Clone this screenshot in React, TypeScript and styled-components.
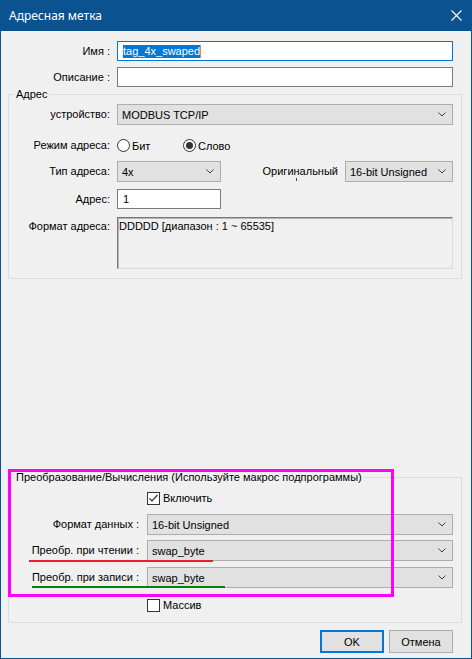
import styled, { createGlobalStyle } from "styled-components"

const GlobalStyle = createGlobalStyle`
  html, body {
    margin: 0;
    padding: 0;
    background: #f0f0f0;
  }
  body {
    font-family: "Liberation Sans", Arial, sans-serif;
    font-size: 11px;
    color: #000;
  }
  * { box-sizing: border-box; }
`

const ACCENT = "#0b5290"
const FOCUS = "#0078d7"

interface RowProps {
  $label: number
  $gap?: number
  $mt?: number
  $pr?: number
  $h?: number
  $align?: string
}

function Chevron (): JSX.Element {
  return (
    <svg width="8" height="5" viewBox="0 0 8 5">
      <polyline points="0.5,0.5 4,4 7.5,0.5" fill="none" stroke="#404040" strokeWidth="1" />
    </svg>
  )
}

function CheckMark (): JSX.Element {
  return (
    <svg width="11" height="11" viewBox="0 0 11 11">
      <polyline points="1.5,5.5 4,8 9.5,2" fill="none" stroke="#333" strokeWidth="1.2" />
    </svg>
  )
}

function Combo ({ value, width }: { value: string, width?: number }): JSX.Element {
  return (
    <Select $width={width}>
      <span>{value}</span>
      <Chevron />
    </Select>
  )
}

function App (): JSX.Element {
  return (
    <>
      <GlobalStyle />
      <Window>
        <TitleBar>
          <Title>Адресная метка</Title>
          <CloseButton>
            <svg width="11" height="11" viewBox="0 0 11 11">
              <path d="M0.5 0.5 L10.5 10.5 M10.5 0.5 L0.5 10.5" stroke="#fff" strokeWidth="1.1" />
            </svg>
          </CloseButton>
        </TitleBar>

        <Body>
          <FieldRow $label={102} $gap={7} $pr={9} $h={20}>
            <Label>Имя :</Label>
            <TextInput $focused>
              <Selected>tag_4x_swaped</Selected>
              <Caret />
            </TextInput>
          </FieldRow>
          <FieldRow $label={102} $gap={7} $pr={9} $mt={6} $h={20}>
            <Label>Описание :</Label>
            <TextInput />
          </FieldRow>

          <Group $mt={7} $pb={9}>
            <Legend>Адрес</Legend>
            <FieldRow $label={101} $gap={7} $mt={3} $h={21}>
              <Label>устройство:</Label>
              <Combo value="MODBUS TCP/IP" />
            </FieldRow>
            <FieldRow $label={101} $gap={7} $mt={10} $h={21}>
              <Label>Режим адреса:</Label>
              <Inline>
                <RadioOption $width={66}>
                  <Radio />
                  <span>Бит</span>
                </RadioOption>
                <RadioOption>
                  <Radio $checked />
                  <span>Слово</span>
                </RadioOption>
              </Inline>
            </FieldRow>
            <FieldRow $label={101} $gap={7} $mt={5} $h={21}>
              <Label>Тип адреса:</Label>
              <Inline $gap={7}>
                <Combo value="4x" width={104} />
                <SideLabel>Оригинальный</SideLabel>
                <Combo value="16-bit Unsigned" width={108} />
              </Inline>
            </FieldRow>
            <FieldRow $label={101} $gap={7} $mt={7} $h={20}>
              <Label>Адрес:</Label>
              <TextInput $width={104}>1</TextInput>
            </FieldRow>
            <FieldRow $label={101} $gap={7} $mt={8} $h={52} $align="start">
              <Label $top={3}>Формат адреса:</Label>
              <FormatBox>DDDDD [диапазон : 1 ~ 65535]</FormatBox>
            </FieldRow>
          </Group>

          <Spacer />

          <Group $pb={9}>
            <Legend>Преобразование/Вычисления (Используйте макрос подпрограммы)</Legend>
            <FieldRow $label={130} $gap={8} $mt={8} $h={14} $align="start">
              <span />
              <CheckOption>
                <CheckBox><CheckMark /></CheckBox>
                <span>Включить</span>
              </CheckOption>
            </FieldRow>
            <FieldRow $label={130} $gap={8} $mt={8} $h={21}>
              <Label>Формат данных :</Label>
              <Combo value="16-bit Unsigned" />
            </FieldRow>
            <FieldRow $label={130} $gap={8} $mt={5} $h={21}>
              <Label>Преобр. при чтении :</Label>
              <Combo value="swap_byte" />
            </FieldRow>
            <FieldRow $label={130} $gap={8} $mt={6} $h={21}>
              <Label>Преобр. при записи :</Label>
              <Combo value="swap_byte" />
            </FieldRow>
            <FieldRow $label={130} $gap={8} $mt={11} $h={14} $align="start">
              <span />
              <CheckOption>
                <CheckBox />
                <span>Массив</span>
              </CheckOption>
            </FieldRow>

            <Highlight />
            <Underline $color="#e8202a" $left={20} $top={82} $width={184} />
            <Underline $color="#0a800a" $left={23} $top={108} $width={193} />
          </Group>

          <ButtonRow>
            <Button $primary>OK</Button>
            <Button>Отмена</Button>
          </ButtonRow>
        </Body>
      </Window>
    </>
  )
}

const Window = styled.div`
  width: 472px;
  height: 659px;
  display: flex;
  flex-direction: column;
  border: 1px solid ${ACCENT};
  border-top: none;
  background: #f0f0f0;
`

const TitleBar = styled.div`
  height: 31px;
  display: flex;
  align-items: center;
  justify-content: space-between;
  background: ${ACCENT};
  color: #fff;
`

const Title = styled.div`
  padding-left: 8px;
  font-family: "Noto Sans", "Liberation Sans", sans-serif;
  font-size: 12px;
`

const CloseButton = styled.div`
  width: 30px;
  height: 31px;
  display: flex;
  align-items: center;
  justify-content: center;
  padding-bottom: 1px;
`

const Body = styled.div`
  flex: 1;
  display: flex;
  flex-direction: column;
  padding: 10px 9px 5px 7px;
`

const FieldRow = styled.div<RowProps>`
  display: grid;
  grid-template-columns: ${p => p.$label}px 1fr;
  column-gap: ${p => p.$gap ?? 7}px;
  align-items: ${p => p.$align ?? "center"};
  height: ${p => p.$h ?? 21}px;
  margin-top: ${p => p.$mt ?? 0}px;
  padding-right: ${p => p.$pr ?? 0}px;
`

const Label = styled.div<{ $top?: number }>`
  text-align: right;
  white-space: nowrap;
  line-height: 13px;
  padding-top: ${p => p.$top ?? 0}px;
`

const TextInput = styled.div<{ $focused?: boolean, $width?: number }>`
  height: 20px;
  width: ${p => p.$width != null ? `${p.$width}px` : "auto"};
  display: flex;
  align-items: center;
  padding-left: 5px;
  background: #fff;
  border: 1px solid ${p => p.$focused === true ? FOCUS : "#7a7a7a"};
`

const Selected = styled.span`
  background: ${FOCUS};
  color: #fff;
  line-height: 13px;
`

const Caret = styled.span`
  width: 1px;
  height: 13px;
  background: #f7871e;
`

const Select = styled.div<{ $width?: number }>`
  height: 21px;
  width: ${p => p.$width != null ? `${p.$width}px` : "auto"};
  flex-shrink: 0;
  display: flex;
  align-items: center;
  justify-content: space-between;
  padding: 0 6px 0 4px;
  background: #e1e1e1;
  border: 1px solid #adadad;
  white-space: nowrap;
`

const Inline = styled.div<{ $gap?: number }>`
  display: flex;
  align-items: center;
  gap: ${p => p.$gap ?? 0}px;
`

const RadioOption = styled.div<{ $width?: number }>`
  display: flex;
  align-items: center;
  gap: 2px;
  width: ${p => p.$width != null ? `${p.$width}px` : "auto"};
`

const Radio = styled.span<{ $checked?: boolean }>`
  width: 13px;
  height: 13px;
  border-radius: 50%;
  border: 1px solid #333;
  background: #fff;
  display: flex;
  align-items: center;
  justify-content: center;

  &::after {
    content: "";
    display: ${p => p.$checked === true ? "block" : "none"};
    width: 7px;
    height: 7px;
    border-radius: 50%;
    background: #333;
  }
`

const SideLabel = styled.div`
  flex: 1;
  position: relative;
  text-align: right;
  white-space: nowrap;
  line-height: 13px;

  &::after {
    content: "";
    position: absolute;
    right: 41px;
    top: 13px;
    width: 1px;
    height: 3px;
    background: #444;
  }
`

const FormatBox = styled.div`
  height: 52px;
  padding: 2px 1px;
  line-height: 13px;
  border: 1px solid;
  border-color: #7a7a7a #dadada #dadada #7a7a7a;
  box-shadow: inset 1px 1px 0 #b4b4b4;
`

const Group = styled.div<{ $mt?: number, $pb: number }>`
  position: relative;
  display: flex;
  flex-direction: column;
  margin-top: ${p => p.$mt ?? 0}px;
  padding: 0 8px ${p => p.$pb}px 0;
  border: 1px solid #dcdcdc;
`

const Legend = styled.div`
  width: fit-content;
  margin: -8px 0 0 6px;
  padding: 0 1px;
  line-height: 14px;
  background: #f0f0f0;
  white-space: nowrap;
`

const CheckOption = styled.div`
  display: flex;
  align-items: center;
  gap: 3px;
  line-height: 13px;
`

const CheckBox = styled.span`
  width: 13px;
  height: 13px;
  border: 1px solid #333;
  background: #fff;
  display: flex;
  align-items: center;
  justify-content: center;
`

const Spacer = styled.div`
  flex: 1;
`

const Highlight = styled.div`
  position: absolute;
  left: -1px;
  top: -9px;
  width: 386px;
  height: 128px;
  border: 3px solid #ff00ff;
  pointer-events: none;
`

const Underline = styled.div<{ $color: string, $left: number, $top: number, $width: number }>`
  position: absolute;
  z-index: 1;
  left: ${p => p.$left}px;
  top: ${p => p.$top}px;
  width: ${p => p.$width}px;
  height: 2px;
  background: ${p => p.$color};
`

const ButtonRow = styled.div`
  display: flex;
  justify-content: flex-end;
  gap: 5px;
  margin-top: 7px;
  padding-right: 9px;
`

const Button = styled.div<{ $primary?: boolean }>`
  width: 64px;
  height: 23px;
  display: flex;
  align-items: center;
  justify-content: center;
  background: #e1e1e1;
  border: ${p => p.$primary === true ? `2px solid ${FOCUS}` : "1px solid #adadad"};
`

export default App
